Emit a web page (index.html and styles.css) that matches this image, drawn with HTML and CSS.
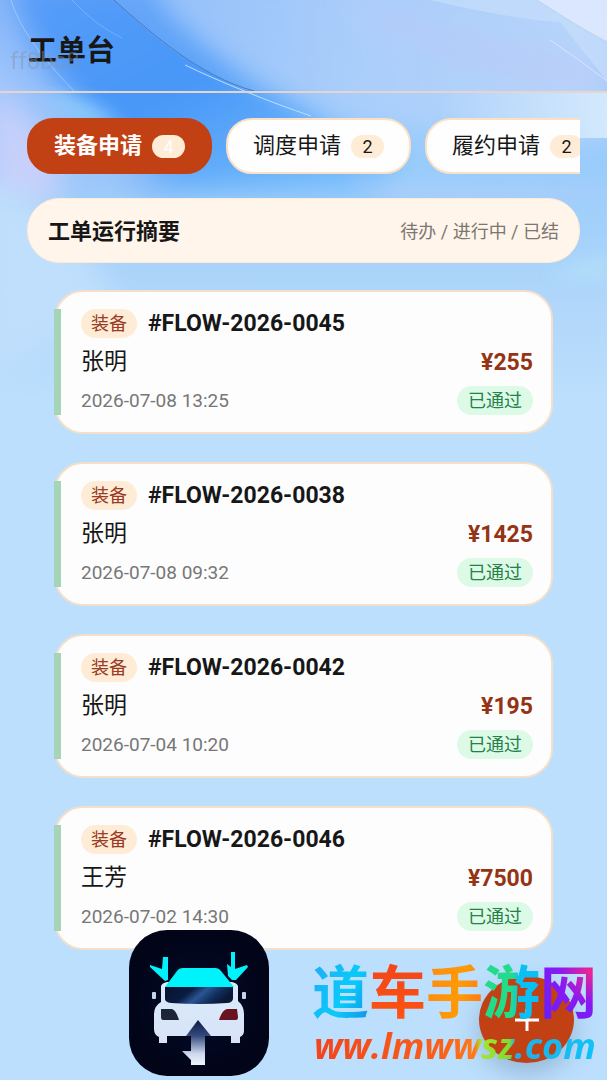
FILE: index.html
```html
<!DOCTYPE html>
<html lang="zh-CN">
<head>
<meta charset="utf-8">
<meta name="viewport" content="width=device-width, initial-scale=1">
<title>工单台</title>
<link rel="stylesheet" href="styles.css">
</head>
<body>
<svg class="sky" viewBox="0 0 607 400" preserveAspectRatio="none" aria-hidden="true">
  <defs>
    <linearGradient id="base" x1="0" y1="0" x2="0" y2="1">
      <stop offset="0" stop-color="#8fc0fc"/><stop offset=".45" stop-color="#9bcdfb"/><stop offset=".75" stop-color="#b0d6fa"/><stop offset="1" stop-color="#bbdffc"/>
    </linearGradient>
    <linearGradient id="deep" x1="0" y1="0" x2="1" y2="1">
      <stop offset="0" stop-color="#5a9df8"/><stop offset=".5" stop-color="#4797f8"/><stop offset="1" stop-color="#7fc4fc"/>
    </linearGradient>
    <linearGradient id="veil" x1="0" y1="0" x2="1" y2="0">
      <stop offset="0" stop-color="#8ebcfa"/><stop offset=".4" stop-color="#adcffb"/><stop offset="1" stop-color="#c3dcfb"/>
    </linearGradient>
    <linearGradient id="pale" x1="0" y1="0" x2="1" y2="0">
      <stop offset="0" stop-color="#cfe6fd" stop-opacity="0"/><stop offset="1" stop-color="#d3e9fc"/>
    </linearGradient>
    <filter id="soft" x="-30%" y="-30%" width="160%" height="160%"><feGaussianBlur stdDeviation="14"/></filter>
    <filter id="mist" x="-30%" y="-30%" width="160%" height="160%"><feGaussianBlur stdDeviation="8"/></filter>
  </defs>
  <rect width="607" height="400" fill="url(#base)"/>
  <path d="M-20 -20H150C190 50 280 90 400 150L380 190H150C80 140 30 80 -20 20Z" fill="url(#deep)" filter="url(#soft)"/>
  <path d="M170 0C220 48 250 78 292 97L340 128L607 138V-20H170Z" fill="url(#veil)" opacity=".8" filter="url(#soft)"/>
  <path d="M114 0H607V90H245C190 68 150 35 114 0Z" fill="#b5d2fb" opacity=".2"/>
  <path d="M-20 -20H10C20 40 60 90 120 140L180 190H-20Z" fill="#9fc3fa" opacity=".75" filter="url(#soft)"/>
  <path d="M-10 85C40 120 70 170 60 200L-10 210Z" fill="#cfd3fb" opacity=".85" filter="url(#soft)"/>
  <path d="M40 95Q85 94 122 124L90 124Z" fill="#9be0fc" opacity=".6" filter="url(#mist)"/>
  <path d="M-20 180Q70 200 120 310L-20 380Z" fill="#bfdffc" filter="url(#soft)"/>
  <path d="M360 0Q470 45 620 65L600 92Q420 65 345 0Z" fill="#bcc8f9" opacity=".6" filter="url(#soft)"/>
  <path d="M430 0Q510 19 560 22L607 81V0Z" fill="#c9e0fc" opacity=".6"/>
  <path d="M537 0Q575 25 607 42V0Z" fill="#dde8fe" opacity=".9"/>
  <path d="M550 40Q580 60 607 81" fill="none" stroke="#dcecfd" stroke-width="1" opacity=".8"/>
  <path d="M537 0Q575 25 607 42" fill="none" stroke="#b4cbea" stroke-width="1" opacity=".7"/>
  <rect x="440" y="92" width="167" height="46" fill="url(#pale)"/>
  <path d="M350 178Q430 195 607 188V194Q420 208 350 184Z" fill="#c2cdfb" opacity=".5" filter="url(#mist)"/>
  <path d="M550 275Q580 262 607 255V280Z" fill="#b6e2f9" opacity=".7" filter="url(#mist)"/>
  <path d="M114 0C155 37 202 77 254 91" fill="none" stroke="#477bbb" stroke-width="1"/>
  <path d="M185 65C220 82 270 102 311 116" fill="none" stroke="#b9e0fe" stroke-width="1"/>
  <path d="M11 0Q22 38 74 91" fill="none" stroke="#a9d2fb" stroke-width="1" opacity=".7"/>
  <path d="M72 0Q95 25 122 38" fill="none" stroke="#a9d2fb" stroke-width="1" opacity=".4"/>
</svg>

<header class="topbar">
  <h1 class="topbar-title">工单台</h1>
  <span class="user-mark">ff8bc8</span>
</header>

<main class="page">
  <nav class="tabs" aria-label="申请类型">
    <button class="tab tab-active" type="button">装备申请<span class="count">4</span></button>
    <button class="tab" type="button">调度申请<span class="count">2</span></button>
    <button class="tab" type="button">履约申请<span class="count">2</span></button>
  </nav>

  <section class="summary">
    <h2 class="summary-title">工单运行摘要</h2>
    <span class="summary-note">待办 / 进行中 / 已结</span>
  </section>

  <section class="orders">
    <article class="order">
      <div class="order-head"><span class="kind">装备</span><h3 class="order-id">#FLOW-2026-0045</h3></div>
      <div class="order-row"><span class="person">张明</span><strong class="price">¥255</strong></div>
      <div class="order-row"><time class="date">2026-07-08 13:25</time><span class="status">已通过</span></div>
    </article>
    <article class="order">
      <div class="order-head"><span class="kind">装备</span><h3 class="order-id">#FLOW-2026-0038</h3></div>
      <div class="order-row"><span class="person">张明</span><strong class="price">¥1425</strong></div>
      <div class="order-row"><time class="date">2026-07-08 09:32</time><span class="status">已通过</span></div>
    </article>
    <article class="order">
      <div class="order-head"><span class="kind">装备</span><h3 class="order-id">#FLOW-2026-0042</h3></div>
      <div class="order-row"><span class="person">张明</span><strong class="price">¥195</strong></div>
      <div class="order-row"><time class="date">2026-07-04 10:20</time><span class="status">已通过</span></div>
    </article>
    <article class="order">
      <div class="order-head"><span class="kind">装备</span><h3 class="order-id">#FLOW-2026-0046</h3></div>
      <div class="order-row"><span class="person">王芳</span><strong class="price">¥7500</strong></div>
      <div class="order-row"><time class="date">2026-07-02 14:30</time><span class="status">已通过</span></div>
    </article>
  </section>
</main>

<button class="fab" type="button" aria-label="新建工单">
  <svg class="fab-icon" viewBox="0 0 24 24" aria-hidden="true"><path d="M12 1V23M0 12H24" stroke="#fff" stroke-width="3" fill="none"/></svg>
</button>

<aside class="brand">
  <svg class="brand-logo" viewBox="0 0 140 146" role="img" aria-label="道车手游网">
    <defs>
      <radialGradient id="night"><stop offset="0" stop-color="#030a2c"/><stop offset="1" stop-color="#020518"/></radialGradient>
      <linearGradient id="glass" x1="0" y1="0" x2="1" y2=".3"><stop offset="0" stop-color="#07112e"/><stop offset=".4" stop-color="#0a1c42"/><stop offset=".6" stop-color="#2b5593"/><stop offset=".8" stop-color="#12305f"/><stop offset="1" stop-color="#0a1738"/></linearGradient>
      <linearGradient id="shaft" x1="0" y1="0" x2="0" y2="1"><stop offset="0" stop-color="#0c1b48"/><stop offset=".35" stop-color="#344a7c"/><stop offset=".75" stop-color="#cdd9ee"/><stop offset="1" stop-color="#eef5fd"/></linearGradient>
      <linearGradient id="body" x1="0" y1="0" x2="0" y2="1"><stop offset="0" stop-color="#d9ecfb"/><stop offset="1" stop-color="#d8e2f7"/></linearGradient>
    </defs>
    <rect width="140" height="146" rx="38" fill="url(#night)"/>
    <path d="M32 56Q33 53 38 52H103Q108 53 109 56V71Q115 76 115 84V101Q115 105 111 107V113H102V106H38V113H30V107Q25 105 25 99V84Q25 76 32 72Z" fill="url(#body)"/>
    <rect x="23" y="62" width="4" height="7" rx="1" fill="#c7d3ec"/><rect x="113" y="62" width="4" height="7" rx="1" fill="#c7d3ec"/>
    <path d="M36 57H104V69Q103 73 98 73Q70 75 42 73Q36 72 36 69Z" fill="url(#glass)"/>
    <path d="M36 57L48 41Q50 38 54 38H86Q90 38 92 41L105 57Z" fill="#00f3fa"/>
    <path d="M34 27H39V50L36 51L21 37V35L33 39Z" fill="#00f3fa"/>
    <path d="M102 22H106V39L118 35L119 37L107 50H103L99 46L98 34L102 37Z" fill="#00f3fa"/>
    <path d="M32 79H43Q47 80 50 90H34Q32 90 32 87Z" fill="#1c2636"/>
    <path d="M108 79H98Q93 80 90 90H107Q109 90 109 87Z" fill="#68131f"/>
    <path d="M69 90L82 106H76V135H62V130L53 121H62V106H57Z" fill="url(#shaft)"/>
  </svg>
  <div class="brand-words">
    <p class="brand-name"><span class="ink-cyan">道</span><span class="ink-red">车</span><span class="ink-orange">手</span><span class="ink-green">游</span><span class="ink-violet">网</span></p>
    <p class="brand-url">ww.lmwwsz.com</p>
  </div>
</aside>
</body>
</html>
```

FILE: styles.css
```css
* { box-sizing: border-box; }

body {
  margin: 0;
  min-height: 100vh;
  background: #bbdffc;
  color: #171717;
  font-family: Roboto, "Noto Sans CJK SC", sans-serif;
  overflow: hidden;
}

h1, h2, h3, p { margin: 0; }

button { font: inherit; color: inherit; cursor: pointer; }

.sky {
  position: absolute;
  top: 0;
  left: 0;
  z-index: -1;
  width: 100%;
  height: 400px;
}

.topbar {
  position: relative;
  height: 93px;
  padding: 28px 28px 0;
  border-bottom: 2px solid #e6d5cf;
}

.topbar-title {
  font-size: 29px;
  line-height: 46px;
  font-weight: 700;
}

.user-mark {
  position: absolute;
  left: 10px;
  bottom: 16px;
  font-size: 24px;
  line-height: 28px;
  color: #8794a8;
  opacity: .45;
}

.page { padding: 25px 27px 0; }

.tabs {
  display: flex;
  gap: 14px;
  overflow: hidden;
}

.tab {
  flex: none;
  display: flex;
  align-items: center;
  gap: 10px;
  height: 56px;
  padding: 0 25px;
  border: 2px solid #fbe0c3;
  border-radius: 26px;
  background: #fefefe;
  font-size: 22px;
  line-height: 32px;
}

.tab-active {
  border-color: #c24114;
  background: #c24114;
  color: #fff;
  font-weight: 700;
}

.count {
  width: 33px;
  height: 23px;
  border-radius: 12px;
  background: #feecd6;
  font-size: 18px;
  line-height: 23px;
  text-align: center;
}

.tab-active .count { font-weight: 400; }

.summary {
  display: flex;
  align-items: center;
  justify-content: space-between;
  height: 65px;
  margin-top: 24px;
  padding: 2px 20px 0;
  border: 1px solid #fdebd6;
  border-radius: 32px;
  background: #fff5eb;
}

.summary-title {
  font-size: 22px;
  line-height: 32px;
}

.summary-note {
  font-size: 18px;
  line-height: 28px;
  color: #7c7771;
}

.orders {
  display: flex;
  flex-direction: column;
  gap: 28px;
  padding: 27px 27px 0;
}

.order {
  position: relative;
  padding: 17px 18px 17px 25px;
  border: 2px solid #f3dfcb;
  border-radius: 29px;
  background: #fdfdfd;
}

.order::before {
  content: "";
  position: absolute;
  left: -2px;
  top: 17px;
  bottom: 17px;
  width: 7px;
  background: #a5d4b9;
}

.order-head {
  display: flex;
  align-items: center;
  gap: 11px;
}

.kind, .status {
  border-radius: 15px;
  font-size: 18px;
  line-height: 29px;
}

.kind {
  padding: 0 10px;
  background: #ffecd7;
  color: #9a3b23;
}

.order-id {
  font-size: 23px;
  line-height: 29px;
}

.order-row {
  display: flex;
  align-items: center;
  justify-content: space-between;
}

.person {
  font-size: 23px;
  line-height: 48px;
}

.price {
  font-size: 23px;
  line-height: 29px;
  color: #943414;
}

.date {
  font-size: 19px;
  line-height: 29px;
  color: #777;
}

.status {
  padding: 0 11px;
  background: #dcfae6;
  color: #26804b;
}

.fab {
  position: absolute;
  right: 33px;
  bottom: 17px;
  display: grid;
  place-items: center;
  width: 95px;
  height: 87px;
  padding: 0;
  border: 0;
  border-radius: 50%;
  background: #c24114;
  box-shadow: 0 10px 24px rgba(80, 110, 150, .35);
}

.fab-icon { width: 24px; height: 24px; }

.brand {
  position: absolute;
  left: 129px;
  right: 13px;
  bottom: 4px;
  display: flex;
  gap: 43px;
  pointer-events: none;
}

.brand-logo {
  flex: none;
  width: 140px;
  height: 146px;
}

.brand-words { padding-top: 24px; }

.brand-name {
  display: flex;
  font-family: "Noto Sans CJK SC", sans-serif;
  font-size: 57px;
  line-height: 68px;
  font-weight: 700;
}

.brand-name span, .brand-url {
  background-clip: text;
  -webkit-background-clip: text;
  color: transparent;
}

.ink-cyan { background-image: linear-gradient(120deg, #21a9f4, #08cbfa 60%, #168fe6); }
.ink-red { background-image: linear-gradient(180deg, #f0431c, #ff5410); }
.ink-orange { background-image: linear-gradient(100deg, #ff8a12, #ff9a05 60%, #ff7415); }
.ink-green { background-image: linear-gradient(90deg, #22dc8c 50%, #09bff4 65%); }
.ink-violet { background-image: radial-gradient(circle at 90% 25%, #f0268f, #8a19f2 45%, #5c22ff); }

.brand-url {
  width: max-content;
  padding: 0 2px;
  font-family: "Open Sans", "Noto Sans", sans-serif;
  font-size: 36px;
  line-height: 48px;
  font-weight: 700;
  font-style: italic;
  background-image: linear-gradient(90deg, #f2431d, #f96019 45%, #ff7a18 57%, #a6e52c 59%, #7ddd35 69%, #1fb1ec 71%, #0fc3f6);
}
```
